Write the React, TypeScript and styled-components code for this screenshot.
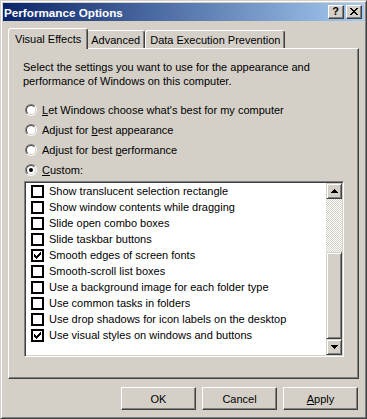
import React from 'react';
import styled, { createGlobalStyle } from 'styled-components';

const face = '#d4d0c8';

const GlobalStyle = createGlobalStyle`
  html, body {
    margin: 0;
    padding: 0;
    background: ${face};
  }
  body {
    font-family: "Liberation Sans", Arial, sans-serif;
    font-size: 11px;
    color: #000;
  }
`;

const effects = [
  { label: 'Show translucent selection rectangle', on: false },
  { label: 'Show window contents while dragging', on: false },
  { label: 'Slide open combo boxes', on: false },
  { label: 'Slide taskbar buttons', on: false },
  { label: 'Smooth edges of screen fonts', on: true },
  { label: 'Smooth-scroll list boxes', on: false },
  { label: 'Use a background image for each folder type', on: false },
  { label: 'Use common tasks in folders', on: false },
  { label: 'Use drop shadows for icon labels on the desktop', on: false },
  { label: 'Use visual styles on windows and buttons', on: true },
];

export default function App() {
  return (
    <>
      <GlobalStyle />
      <Window>
        <TitleBar>
          <Title>Performance Options</Title>
          <Caption>
            <CaptionButton aria-label="Help">
              <HelpGlyph>?</HelpGlyph>
            </CaptionButton>
            <CaptionButton aria-label="Close">
              <svg width="8" height="7" viewBox="0 0 8 7" shapeRendering="crispEdges">
                <path
                  d="M0 0h2v1h-2z M6 0h2v1h-2z M1 1h2v1h-2z M5 1h2v1h-2z M2 2h4v1h-4z M3 3h2v1h-2z M2 4h4v1h-4z M1 5h2v1h-2z M5 5h2v1h-2z M0 6h2v1h-2z M6 6h2v1h-2z"
                  fill="#000"
                />
              </svg>
            </CaptionButton>
          </Caption>
        </TitleBar>

        <Body>
          <TabRow>
            <Tab $active>Visual Effects</Tab>
            <Tab>Advanced</Tab>
            <Tab>Data Execution Prevention</Tab>
          </TabRow>

          <Panel>
            <Intro>
              Select the settings you want to use for the appearance and
              <br />
              performance of Windows on this computer.
            </Intro>

            <Radios>
              <RadioRow>
                <Radio />
                <span>
                  <u>L</u>et Windows choose what's best for my computer
                </span>
              </RadioRow>
              <RadioRow>
                <Radio />
                <span>
                  Adjust for <u>b</u>est appearance
                </span>
              </RadioRow>
              <RadioRow>
                <Radio />
                <span>
                  Adjust for best <u>p</u>erformance
                </span>
              </RadioRow>
              <RadioRow>
                <Radio $checked />
                <span>
                  <u>C</u>ustom:
                </span>
              </RadioRow>
            </Radios>

            <ListBox>
              <Items>
                {effects.map((e) => (
                  <Item key={e.label}>
                    <Check>
                      {e.on && (
                        <svg width="7" height="7" viewBox="0 0 7 7" shapeRendering="crispEdges">
                          <path
                            d="M0 2h1v3h-1z M1 3h1v3h-1z M2 4h1v3h-1z M3 3h1v3h-1z M4 2h1v3h-1z M5 1h1v3h-1z M6 0h1v3h-1z"
                            fill="#000"
                          />
                        </svg>
                      )}
                    </Check>
                    {e.label}
                  </Item>
                ))}
              </Items>
              <ScrollBar>
                <ScrollButton>
                  <svg width="7" height="4" viewBox="0 0 7 4" shapeRendering="crispEdges">
                    <path d="M3 0h1v1h-1z M2 1h3v1h-3z M1 2h5v1h-5z M0 3h7v1h-7z" fill="#000" />
                  </svg>
                </ScrollButton>
                <Track />
                <Thumb />
                <ScrollButton>
                  <svg width="7" height="4" viewBox="0 0 7 4" shapeRendering="crispEdges">
                    <path d="M0 0h7v1h-7z M1 1h5v1h-5z M2 2h3v1h-3z M3 3h1v1h-1z" fill="#000" />
                  </svg>
                </ScrollButton>
              </ScrollBar>
            </ListBox>
          </Panel>

          <ButtonRow>
            <Button>OK</Button>
            <Button>Cancel</Button>
            <Button>
              <u>A</u>pply
            </Button>
          </ButtonRow>
        </Body>
      </Window>
    </>
  );
}

const Window = styled.div`
  box-sizing: border-box;
  width: 367px;
  height: 419px;
  background: ${face};
  border: 1px solid;
  border-color: ${face} #404040 #404040 ${face};
  box-shadow: inset 1px 1px #fff, inset -1px -1px #808080;
  padding: 2px;
  display: flex;
  flex-direction: column;
`;

const TitleBar = styled.div`
  height: 18px;
  flex: none;
  display: flex;
  align-items: center;
  justify-content: space-between;
  padding: 0 2px 0 1px;
  background: linear-gradient(to right, #0a246a, #a6caf0);
`;

const Title = styled.div`
  color: #fff;
  font-weight: 700;
  font-size: 11.7px;
`;

const Caption = styled.div`
  display: flex;
  gap: 2px;
`;

const CaptionButton = styled.div`
  box-sizing: border-box;
  width: 16px;
  height: 14px;
  background: ${face};
  border: 1px solid;
  border-color: #fff #404040 #404040 #fff;
  box-shadow: inset -1px -1px #808080;
  display: flex;
  align-items: center;
  justify-content: center;
  padding: 0 1px 1px 0;
`;

const HelpGlyph = styled.span`
  font-weight: 700;
  font-size: 11px;
  line-height: 11px;
`;

const Body = styled.div`
  flex: 1;
  display: flex;
  flex-direction: column;
  padding: 7px 5px 6px 5px;
`;

const TabRow = styled.div`
  display: flex;
  align-items: flex-end;
  padding-left: 2px;
  height: 21px;
  position: relative;
  z-index: 1;
  margin-bottom: -1px;
`;

const Tab = styled.div<{ $active?: boolean }>`
  box-sizing: border-box;
  height: ${(p) => (p.$active ? 21 : 18)}px;
  padding: ${(p) => (p.$active ? '0 6px 1px' : '0 4px')};
  margin: ${(p) => (p.$active ? '0 -2px' : '0 0 1px')};
  position: relative;
  z-index: ${(p) => (p.$active ? 2 : 1)};
  display: flex;
  align-items: center;
  background: ${face};
  border: 1px solid;
  border-bottom: none;
  border-color: #fff #404040 transparent #fff;
  border-radius: 3px 3px 0 0;
  box-shadow: inset -1px 0 #808080;
  white-space: nowrap;
`;

const Panel = styled.div`
  flex: 1;
  display: flex;
  flex-direction: column;
  border: 1px solid;
  border-color: #fff #404040 #404040 #fff;
  box-shadow: inset -1px -1px #808080;
  padding: 11px 14px 0 14px;
`;

const Intro = styled.div`
  line-height: 14px;
`;

const Radios = styled.div`
  margin-top: 12px;
  display: flex;
  flex-direction: column;
`;

const RadioRow = styled.div`
  height: 20px;
  display: flex;
  align-items: center;
  padding-left: 2px;
  white-space: nowrap;
`;

const Radio = styled.span<{ $checked?: boolean }>`
  box-sizing: border-box;
  flex: none;
  position: relative;
  width: 12px;
  height: 12px;
  margin-right: 5px;
  border-radius: 50%;
  border: 1px solid;
  border-color: #808080 #fff #fff #808080;
  &::before {
    content: '';
    position: absolute;
    inset: 0;
    box-sizing: border-box;
    border-radius: 50%;
    border: 1px solid;
    border-color: #404040 ${face} ${face} #404040;
    background: #fff;
  }
  &::after {
    content: '';
    display: ${(p) => (p.$checked ? 'block' : 'none')};
    position: absolute;
    left: 3px;
    top: 3px;
    width: 4px;
    height: 4px;
    border-radius: 50%;
    background: #000;
  }
`;

const ListBox = styled.div`
  margin: 1px 0 0 1px;
  height: 176px;
  box-sizing: border-box;
  display: flex;
  background: #fff;
  border: 1px solid;
  border-color: #808080 #fff #fff #808080;
  box-shadow: inset 1px 1px #404040, inset -1px -1px ${face};
  padding: 1px;
`;

const Items = styled.div`
  flex: 1;
`;

const Item = styled.div`
  height: 16px;
  display: flex;
  align-items: center;
  padding-left: 5px;
  white-space: nowrap;
`;

const Check = styled.span`
  box-sizing: border-box;
  flex: none;
  width: 13px;
  height: 13px;
  margin-right: 5px;
  border: 2px solid #000;
  background: #fff;
  display: flex;
  align-items: center;
  justify-content: center;
`;

const ScrollBar = styled.div`
  width: 16px;
  display: flex;
  flex-direction: column;
`;

const raised = `
  box-sizing: border-box;
  background: ${face};
  border: 1px solid;
  border-color: ${face} #404040 #404040 ${face};
  box-shadow: inset 1px 1px #fff, inset -1px -1px #808080;
`;

const ScrollButton = styled.div`
  ${raised}
  height: 16px;
  flex: none;
  display: flex;
  align-items: center;
  justify-content: center;
`;

const Track = styled.div`
  height: 53px;
  flex: none;
  background-color: #fff;
  background-image: conic-gradient(${face} 25%, transparent 0 50%, ${face} 0 75%, transparent 0);
  background-size: 2px 2px;
`;

const Thumb = styled.div`
  ${raised}
  flex: 1;
`;

const ButtonRow = styled.div`
  display: flex;
  justify-content: flex-end;
  gap: 6px;
  margin-top: 8px;
  padding-right: 1px;
`;

const Button = styled.div`
  box-sizing: border-box;
  width: 75px;
  height: 23px;
  display: flex;
  align-items: center;
  justify-content: center;
  background: ${face};
  border: 1px solid;
  border-color: #fff #404040 #404040 #fff;
  box-shadow: inset -1px -1px #808080;
`;
